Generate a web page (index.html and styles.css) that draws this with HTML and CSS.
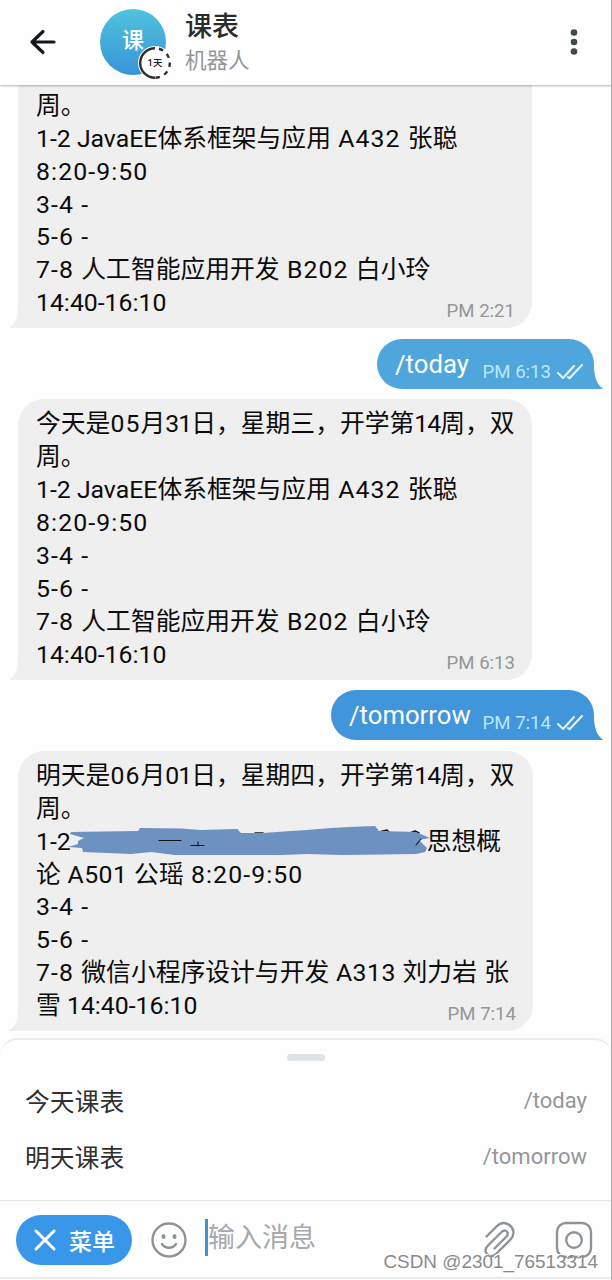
FILE: index.html
```html
<!DOCTYPE html>
<html lang="zh-CN">

<head>
  <meta charset="UTF-8" />
  <meta name="viewport" content="width=device-width, initial-scale=1.0" />
  <title>课表</title>
  <link rel="stylesheet" href="styles.css">
</head>

<body>
  <div class="app">
    <header class="header">
      <svg class="back" width="28" height="28" viewBox="0 0 28 28">
        <path d="M26 14H4M15 3.500L4 14l11 10.500" />
      </svg>
      <div class="avatar">
        课
        <div class="timer">
          <svg width="34" height="34" viewBox="0 0 34 34">
            <circle cx="17" cy="17" r="17" fill="#fff" />
            <path d="M17 2.200A14.800 14.800 0 0 0 17 31.800" />
            <path d="M17 2.200A14.800 14.800 0 0 1 17 31.800" stroke-dasharray="4.500 4.800" stroke-dashoffset="-4" />
          </svg>
          <span>1天</span>
        </div>
      </div>
      <div class="peer">
        <h1>课表</h1>
        <p>机器人</p>
      </div>
      <svg class="more" width="8" height="28" viewBox="0 0 8 28">
        <circle cx="4" cy="4.500" r="3.300" />
        <circle cx="4" cy="14" r="3.300" />
        <circle cx="4" cy="23.500" r="3.300" />
      </svg>
    </header>

    <main class="messages">
      <div class="bubble in">
        <p>周。</p>
        <p><i>1-2 JavaEE</i>体系框架与应用<i class="loose"> A432 </i>张聪</p>
        <p><i class="loose">8:20-9:50</i></p>
        <p><i class="loose">3-4 -</i></p>
        <p><i class="loose">5-6 -</i></p>
        <p><i class="loose">7-8 </i>人工智能应用开发<i class="loose"> B202 </i>白小玲</p>
        <p class="last"><i>14:40-16:10</i><time>PM 2:21</time></p>
        <svg class="tail" width="12" height="20" viewBox="0 0 12 20"><path d="M9 0C9 10 6 16 0 19.500Q1 20 3 20H12V0z" /></svg>
      </div>

      <div class="bubble out today">
        <span class="command">/today</span>
        <time>PM 6:13</time>
        <svg class="checks" width="26" height="16" viewBox="0 0 26 16"><path d="M1 9l5 5L17 2M11 13l1.500 1.200L25 1" /></svg>
        <svg class="tail" width="12" height="24" viewBox="0 0 12 24"><path d="M3 0C3 12 6 20 12 23.500Q11 24 9 24H0V0z" /></svg>
      </div>

      <div class="bubble in">
        <p>今天是<i class="loose">05</i>月<i class="tight">31</i>日，星期三，开学第<i class="tight">14</i>周，双</p>
        <p>周。</p>
        <p><i>1-2 JavaEE</i>体系框架与应用<i class="loose"> A432 </i>张聪</p>
        <p><i class="loose">8:20-9:50</i></p>
        <p><i class="loose">3-4 -</i></p>
        <p><i class="loose">5-6 -</i></p>
        <p><i class="loose">7-8 </i>人工智能应用开发<i class="loose"> B202 </i>白小玲</p>
        <p class="last"><i>14:40-16:10</i><time>PM 6:13</time></p>
        <svg class="tail" width="12" height="20" viewBox="0 0 12 20"><path d="M9 0C9 10 6 16 0 19.500Q1 20 3 20H12V0z" /></svg>
      </div>

      <div class="bubble out tomorrow">
        <span class="command">/tomorrow</span>
        <time>PM 7:14</time>
        <svg class="checks" width="26" height="16" viewBox="0 0 26 16"><path d="M1 9l5 5L17 2M11 13l1.500 1.200L25 1" /></svg>
        <svg class="tail" width="12" height="24" viewBox="0 0 12 24"><path d="M3 0C3 12 6 20 12 23.500Q11 24 9 24H0V0z" /></svg>
      </div>

      <div class="bubble in wide">
        <p>明天是<i class="loose">06</i>月<i class="tight">01</i>日，星期四，开学第<i class="tight">14</i>周，双</p>
        <p>周。</p>
        <p class="covered"><i>1-2</i>
          <svg class="scribble" width="362" height="32" viewBox="67 823 362 32">
            <path class="ink" d="M374 831l12-3 4 4M409 831l5-2 4 2M136 830l10 1M236 828v5M254 831h8v3" />
            <path d="M70 830L137 829L139 826L180 826.500L200 828L236 827L240 831L262 831L290 829L306 828L330 826L348 825L374 824L378 829L415 830L429 836L418 838L426 846L424 850L415 852L342 853L306 852L280 853L174 853L150 850L130 852L82 850L81 846L67 845L77 842L77 839L83 836L69 832z" />
            <path class="ink thin" d="M158 838.500h22M190 843.500h13M197 840v4M415 843l5-6" />
          </svg>
          思想概</p>
        <p>论<i class="mid"> A501 </i>公瑶<i class="loose"> 8:20-9:50</i></p>
        <p><i class="loose">3-4 -</i></p>
        <p><i class="loose">5-6 -</i></p>
        <p><i class="loose">7-8 </i>微信小程序设计与开发<i class="mid"> A313 </i>刘力岩<i class="loose"> </i>张</p>
        <p class="last"><span>雪<i> 14:40-16:10</i></span><time>PM 7:14</time></p>
        <svg class="tail" width="12" height="20" viewBox="0 0 12 20"><path d="M9 0C9 10 6 16 0 19.500Q1 20 3 20H12V0z" /></svg>
      </div>
    </main>

    <section class="commands">
      <div class="handle"></div>
      <div class="row"><span>今天课表</span><span class="slash">/today</span></div>
      <div class="row"><span>明天课表</span><span class="slash">/tomorrow</span></div>
    </section>

    <footer class="composer">
      <button class="menu-btn" type="button">
        <svg width="24" height="24" viewBox="0 0 24 24"><path d="M3 3l18 18M21 3L3 21" /></svg>
        菜单
      </button>
      <svg class="icon smile" width="38" height="38" viewBox="0 0 38 38">
        <circle cx="19" cy="19" r="16.500" />
        <path d="M12 23c3.500 5 10.500 5 14 0" />
        <ellipse class="fill" cx="13.500" cy="15.500" rx="2" ry="2.500" />
        <ellipse class="fill" cx="24.500" cy="15.500" rx="2" ry="2.500" />
      </svg>
      <div class="field">输入消息</div>
      <svg class="icon clip" width="34" height="38" viewBox="0 0 34 38">
        <path d="M3.500 15.500L13.500 5.500C18 1 23 1.500 27 4.500C32 9 31 14.500 27.500 18.500L12.500 33.500C9 36.500 5.500 35 4 33C1.500 30 2.500 27 5 24.500L18.500 11C21 8.500 24 9.500 24.500 11.500C25 13 24.500 14.500 23.500 15.500L11.500 27.500" />
      </svg>
      <svg class="icon camera" width="38" height="38" viewBox="0 0 38 38">
        <rect x="2" y="2" width="34" height="34" rx="9" />
        <circle cx="19" cy="19" r="7.800" />
      </svg>
    </footer>
    <div class="watermark">CSDN @2301_76513314</div>
  </div>
</body>

</html>
```
FILE: styles.css
```css
:root {
  --in: #efefef;
  --gray: #949698;
  --blue: #3897e8;
}

* {
  margin: 0;
  padding: 0;
  box-sizing: border-box;
}

body {
  background: #fefefe;
  font-family: Roboto, "Noto Sans CJK SC", sans-serif;
  color: #0b0b0b;
}

svg {
  display: block;
  fill: none;
  stroke-linecap: round;
  stroke-linejoin: round;
}

.app {
  position: relative;
  display: flex;
  flex-direction: column;
  width: 612px;
  height: 1280px;
  border-right: 1px solid #a9a9a9;
  overflow: hidden;
}

/* Header */
.header {
  display: flex;
  flex: none;
  align-items: center;
  height: 85px;
  padding: 0 33px 2px 28px;
  background: #fefefe;
  box-shadow: 0 1px 2px rgba(0, 0, 0, 0.3);
  z-index: 1;
}

.back {
  stroke: #15181b;
  stroke-width: 3.2;
}

.avatar {
  position: relative;
  width: 66px;
  height: 66px;
  margin-left: 44px;
  border-radius: 50%;
  background: linear-gradient(#4fc3dc, #3a93d8);
  color: #fff;
  font-size: 22px;
  font-weight: 500;
  line-height: 64px;
  text-align: center;
}

.timer {
  position: absolute;
  left: 38px;
  top: 37px;
  width: 34px;
  height: 34px;
}

.timer path {
  stroke: #2e2e2e;
  stroke-width: 2.4;
  stroke-linecap: butt;
}

.timer span {
  position: absolute;
  inset: 0;
  color: #222;
  font-size: 9.5px;
  line-height: 34px;
}

.peer {
  margin-left: 19px;
  padding-top: 3px;
}

.peer h1 {
  color: #2b2b2b;
  font-size: 27px;
  font-weight: 500;
  line-height: 36px;
}

.peer p {
  color: var(--gray);
  font-size: 21.5px;
  line-height: 32px;
}

.more {
  margin-left: auto;
  fill: #42494d;
}

/* Messages */
.messages {
  display: flex;
  flex: 1;
  flex-direction: column;
  justify-content: flex-end;
  min-height: 0;
  gap: 10.5px;
  padding: 0 17px 7px 18px;
}

.bubble {
  position: relative;
  flex: none;
}

.bubble i {
  font-style: normal;
  letter-spacing: 0;
  white-space: pre;
}

.bubble .loose {
  letter-spacing: 1.1px;
}

.bubble .mid {
  letter-spacing: 0.5px;
}

.bubble .tight {
  letter-spacing: -1px;
}

.in {
  align-self: flex-start;
  width: 514px;
  padding: 9.3px 17px 8px 18px;
  border-radius: 26px 26px 26px 0;
  background: var(--in);
  font-size: 24.8px;
}

/* the oldest message runs up under the header */
.in:first-child {
  border-top-left-radius: 0;
  border-top-right-radius: 0;
  padding-top: 5px;
}

.in.wide {
  width: 515px;
}

.in p {
  height: 32.9px;
  line-height: 32.9px;
  white-space: nowrap;
}

.in .last {
  display: flex;
  justify-content: space-between;
}

.in time {
  color: var(--gray);
  font-size: 18.6px;
  line-height: 49px;
}

.in .covered {
  display: flex;
}

.scribble {
  flex: none;
  height: 32px;
  margin: -1px -3px 0 -3px;
  fill: #6d91c0;
}

.ink {
  fill: none;
  stroke: #151515;
  stroke-width: 1.6;
}

.thin {
  stroke-width: 1.1;
}

.tail {
  position: absolute;
  bottom: 0;
}

.in .tail {
  left: -9px;
  fill: var(--in);
}

.out {
  display: flex;
  align-self: flex-end;
  height: 50px;
  padding-left: 18px;
  border-radius: 25px 25px 0 25px;
  color: #fff;
}

.today {
  width: 217px;
  background: #4fa6dd;
  fill: #4fa6dd;
}

.tomorrow {
  width: 263px;
  background: #4195db;
  fill: #4195db;
}

.out .tail {
  right: -9px;
  fill: inherit;
}

.command {
  font-size: 25.7px;
  line-height: 50px;
}

.out time {
  margin-left: auto;
  color: #b9e8fb;
  font-size: 18.6px;
  line-height: 66px;
}

.checks {
  z-index: 1;
  margin: 25px 11px 0 6px;
  stroke: #e6f7ff;
  stroke-width: 2;
}

/* Bot commands */
.commands {
  flex: none;
  height: 162px;
  margin-right: -1px;
  padding: 14px 25px 0;
  border-top: 2px solid #ececec;
  border-radius: 18px 18px 0 0;
  background: #fefefe;
}

.handle {
  width: 38px;
  height: 7px;
  margin: 0 auto 13px;
  border-radius: 4px;
  background: #dfe2e6;
}

.row {
  display: flex;
  align-items: center;
  justify-content: space-between;
  height: 56px;
  padding-bottom: 4px;
  color: #303030;
  font-size: 24.8px;
}

.slash {
  color: var(--gray);
  font-size: 22px;
}

/* Composer */
.composer {
  display: flex;
  flex: none;
  align-items: center;
  height: 79px;
  margin-bottom: 1px;
  padding: 2px 18px 0 16px;
  border-top: 1px solid #e4e4e4;
  border-bottom: 2px solid #ececec;
}

.menu-btn {
  display: flex;
  align-items: center;
  width: 116px;
  height: 50px;
  padding-left: 17px;
  gap: 12px;
  border: none;
  border-radius: 25px;
  background: var(--blue);
  color: #fff;
  font-family: inherit;
  font-size: 23px;
  font-weight: 500;
  white-space: nowrap;
}

.menu-btn svg {
  stroke: #fff;
  stroke-width: 3;
}

.icon {
  stroke: #8e9397;
  stroke-width: 2.4;
}

.smile {
  margin-left: 18px;
}

.fill {
  fill: #8e9397;
  stroke: none;
}

.field {
  height: 37px;
  margin: -6px auto 0 17px;
  border-left: 3px solid #3f93d2;
  color: #a5a9ad;
  font-size: 27px;
  line-height: 39px;
}

.camera {
  margin-left: 38px;
}

.watermark {
  position: absolute;
  right: 13px;
  bottom: 7px;
  color: #8a8a8a;
  font-family: "Liberation Sans", sans-serif;
  font-size: 18.9px;
  line-height: 22px;
  text-shadow: -1px -1px 0 #fff;
}
```
